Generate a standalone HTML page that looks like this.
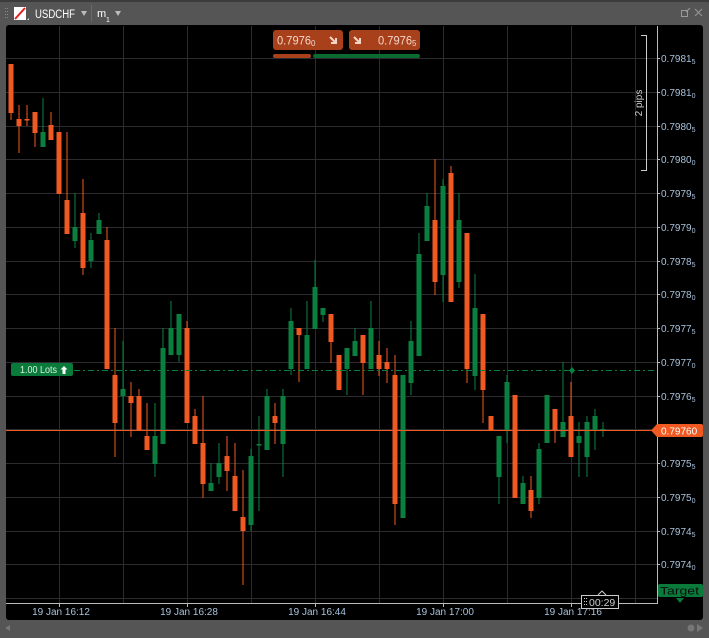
<!DOCTYPE html>
<html><head><meta charset="utf-8"><style>
html,body{margin:0;padding:0;background:#3a3a3a;}
body{width:709px;height:638px;overflow:hidden;position:relative;font-family:"Liberation Sans",sans-serif;}
.frame{position:absolute;left:0;top:0;width:709px;height:638px;background:#555;border-radius:4px 4px 0 0;}
svg{position:absolute;left:0;top:0;}
</style></head><body>
<div class="frame"></div>
<svg width="709" height="638" viewBox="0 0 709 638" font-family="Liberation Sans, sans-serif">
<!-- header -->
<rect x="0" y="0" width="709" height="2" fill="#3c3c3c"/>
<g fill="#888"><rect x="5" y="8" width="1" height="1"/><rect x="7" y="8" width="1" height="1"/><rect x="5" y="11" width="1" height="1"/><rect x="7" y="11" width="1" height="1"/><rect x="5" y="14" width="1" height="1"/><rect x="7" y="14" width="1" height="1"/><rect x="5" y="17" width="1" height="1"/><rect x="7" y="17" width="1" height="1"/></g>
<rect x="14" y="7" width="12" height="13" fill="#fff"/>
<line x1="15" y1="19" x2="25" y2="8" stroke="#e02020" stroke-width="2"/>
<path d="M27 20 L29 20 L29 18 Z" fill="#ddd"/>
<text x="35" y="18" font-size="11.5" fill="#fff" textLength="40" lengthAdjust="spacingAndGlyphs">USDCHF</text>
<path d="M81 11 L87 11 L84 16 Z" fill="#bbb"/>
<rect x="91" y="5" width="1" height="17" fill="#6a6a6a"/>
<text x="97" y="17" font-size="11" fill="#fff">m</text>
<text x="106" y="22" font-size="7" fill="#fff">1</text>
<path d="M115 11 L121 11 L118 16 Z" fill="#bbb"/>
<g stroke="#999" fill="none" stroke-width="1"><rect x="681.5" y="10.5" width="6" height="6"/><path d="M686 12 L690 8"/><path d="M695 9 L702 16 M702 9 L695 16"/></g>
<!-- chart bg -->
<rect x="6" y="25" width="697" height="595" rx="3" fill="#000"/>
<!-- grid -->
<g stroke="#2c2c30" stroke-width="1">
<line x1="6" x2="657" y1="58.5" y2="58.5"/><line x1="6" x2="657" y1="92.5" y2="92.5"/><line x1="6" x2="657" y1="126.5" y2="126.5"/><line x1="6" x2="657" y1="159.5" y2="159.5"/><line x1="6" x2="657" y1="193.5" y2="193.5"/><line x1="6" x2="657" y1="227.5" y2="227.5"/><line x1="6" x2="657" y1="261.5" y2="261.5"/><line x1="6" x2="657" y1="294.5" y2="294.5"/><line x1="6" x2="657" y1="328.5" y2="328.5"/><line x1="6" x2="657" y1="362.5" y2="362.5"/><line x1="6" x2="657" y1="396.5" y2="396.5"/><line x1="6" x2="657" y1="429.5" y2="429.5"/><line x1="6" x2="657" y1="463.5" y2="463.5"/><line x1="6" x2="657" y1="497.5" y2="497.5"/><line x1="6" x2="657" y1="531.5" y2="531.5"/><line x1="6" x2="657" y1="564.5" y2="564.5"/><line x1="6" x2="657" y1="598.5" y2="598.5"/>
<line y1="26" y2="603" x1="59.5" x2="59.5"/><line y1="26" y2="603" x1="123.5" x2="123.5"/><line y1="26" y2="603" x1="187.5" x2="187.5"/><line y1="26" y2="603" x1="251.5" x2="251.5"/><line y1="26" y2="603" x1="315.5" x2="315.5"/><line y1="26" y2="603" x1="379.5" x2="379.5"/><line y1="26" y2="603" x1="443.5" x2="443.5"/><line y1="26" y2="603" x1="507.5" x2="507.5"/><line y1="26" y2="603" x1="571.5" x2="571.5"/><line y1="26" y2="603" x1="635.5" x2="635.5"/>
</g>
<!-- axes -->
<line x1="657.5" y1="26" x2="657.5" y2="603" stroke="#bbb"/>
<line x1="6" y1="603.5" x2="658" y2="603.5" stroke="#bbb"/>
<g fill="#bbb"><rect x="59" y="603" width="1" height="4"/><rect x="187" y="603" width="1" height="4"/><rect x="315" y="603" width="1" height="4"/><rect x="443" y="603" width="1" height="4"/><rect x="571" y="603" width="1" height="4"/></g>
<g font-size="10" fill="#a9c2dc" text-anchor="middle">
<text x="61" y="615">19 Jan 16:12</text><text x="189" y="615">19 Jan 16:28</text><text x="317" y="615">19 Jan 16:44</text><text x="445" y="615">19 Jan 17:00</text><text x="573" y="615">19 Jan 17:16</text>
</g>
<!-- price labels -->
<g font-size="10" fill="#a9c2dc">
<g fill="#bbb"><rect x="657" y="58" width="3" height="1"/><rect x="657" y="92" width="3" height="1"/><rect x="657" y="126" width="3" height="1"/><rect x="657" y="159" width="3" height="1"/><rect x="657" y="193" width="3" height="1"/><rect x="657" y="227" width="3" height="1"/><rect x="657" y="261" width="3" height="1"/><rect x="657" y="294" width="3" height="1"/><rect x="657" y="328" width="3" height="1"/><rect x="657" y="362" width="3" height="1"/><rect x="657" y="396" width="3" height="1"/><rect x="657" y="463" width="3" height="1"/><rect x="657" y="497" width="3" height="1"/><rect x="657" y="531" width="3" height="1"/><rect x="657" y="564" width="3" height="1"/></g>
<text x="661" y="62">0.7981<tspan font-size="7" dy="2">5</tspan></text>
<text x="661" y="96">0.7981<tspan font-size="7" dy="2">0</tspan></text>
<text x="661" y="130">0.7980<tspan font-size="7" dy="2">5</tspan></text>
<text x="661" y="163">0.7980<tspan font-size="7" dy="2">0</tspan></text>
<text x="661" y="197">0.7979<tspan font-size="7" dy="2">5</tspan></text>
<text x="661" y="231">0.7979<tspan font-size="7" dy="2">0</tspan></text>
<text x="661" y="265">0.7978<tspan font-size="7" dy="2">5</tspan></text>
<text x="661" y="298">0.7978<tspan font-size="7" dy="2">0</tspan></text>
<text x="661" y="332">0.7977<tspan font-size="7" dy="2">5</tspan></text>
<text x="661" y="366">0.7977<tspan font-size="7" dy="2">0</tspan></text>
<text x="661" y="400">0.7976<tspan font-size="7" dy="2">5</tspan></text>
<text x="661" y="467">0.7975<tspan font-size="7" dy="2">5</tspan></text>
<text x="661" y="501">0.7975<tspan font-size="7" dy="2">0</tspan></text>
<text x="661" y="535">0.7974<tspan font-size="7" dy="2">5</tspan></text>
<text x="661" y="568">0.7974<tspan font-size="7" dy="2">0</tspan></text>
</g>
<!-- pips bracket -->
<path d="M641 35.5 H646.5 V170.5 H641" stroke="#ccc" fill="none"/>
<text transform="translate(642,103) rotate(-90)" font-size="10" fill="#ccc" text-anchor="middle">2 pips</text>
<!-- candles -->
<g id="c">
<g fill="#f05a22">
<rect x="10.5" y="64" width="1" height="56"/><rect x="8.5" y="64" width="5" height="49"/>
<rect x="18.5" y="105" width="1" height="48"/><rect x="16.5" y="119" width="5" height="7"/>
<rect x="26.5" y="105" width="1" height="21"/><rect x="24.5" y="119" width="5" height="1.5"/>
<rect x="34.5" y="112" width="1" height="35"/><rect x="32.5" y="112" width="5" height="21"/>
<rect x="50.5" y="112" width="1" height="28"/><rect x="48.5" y="125" width="5" height="15"/>
<rect x="56.5" y="132" width="5" height="62"/>
<rect x="66.5" y="132" width="1" height="102"/><rect x="64.5" y="200" width="5" height="34"/>
<rect x="82.5" y="179" width="1" height="96"/><rect x="80.5" y="213" width="5" height="55"/>
<rect x="106.5" y="227" width="1" height="142"/><rect x="104.5" y="240" width="5" height="129"/>
<rect x="114.5" y="328" width="1" height="129"/><rect x="112.5" y="375" width="5" height="48"/>
<rect x="130.5" y="382" width="1" height="55"/><rect x="128.5" y="396" width="5" height="7"/>
<rect x="138.5" y="389" width="1" height="41"/><rect x="136.5" y="396" width="5" height="34"/>
<rect x="146.5" y="403" width="1" height="47"/><rect x="144.5" y="436" width="5" height="14"/>
<rect x="186.5" y="321" width="1" height="102"/><rect x="184.5" y="328" width="5" height="95"/>
<rect x="194.5" y="409" width="1" height="35"/><rect x="192.5" y="416" width="5" height="28"/>
<rect x="202.5" y="396" width="1" height="102"/><rect x="200.5" y="443" width="5" height="41"/>
<rect x="226.5" y="436" width="1" height="55"/><rect x="224.5" y="456" width="5" height="15"/>
<rect x="234.5" y="443" width="1" height="68"/><rect x="232.5" y="476" width="5" height="35"/>
<rect x="242.5" y="470" width="1" height="115"/><rect x="240.5" y="517" width="5" height="14"/>
<rect x="274.5" y="403" width="1" height="41"/><rect x="272.5" y="416" width="5" height="7"/>
<rect x="298.5" y="328" width="1" height="54"/><rect x="296.5" y="328" width="5" height="7"/>
<rect x="330.5" y="314" width="1" height="49"/><rect x="328.5" y="314" width="5" height="28"/>
<rect x="336.5" y="355" width="5" height="35"/>
<rect x="362.5" y="335" width="1" height="60"/><rect x="360.5" y="335" width="5" height="28"/>
<rect x="378.5" y="341" width="1" height="35"/><rect x="376.5" y="355" width="5" height="14"/>
<rect x="386.5" y="348" width="1" height="35"/><rect x="384.5" y="362" width="5" height="7"/>
<rect x="394.5" y="355" width="1" height="170"/><rect x="392.5" y="375" width="5" height="129"/>
<rect x="434.5" y="159" width="1" height="136"/><rect x="432.5" y="220" width="5" height="62"/>
<rect x="450.5" y="166" width="1" height="136"/><rect x="448.5" y="173" width="5" height="129"/>
<rect x="466.5" y="233" width="1" height="150"/><rect x="464.5" y="233" width="5" height="136"/>
<rect x="482.5" y="314" width="1" height="109"/><rect x="480.5" y="314" width="5" height="76"/>
<rect x="488.5" y="416" width="5" height="14"/>
<rect x="512.5" y="395" width="5" height="103"/>
<rect x="530.5" y="476" width="1" height="42"/><rect x="528.5" y="490" width="5" height="21"/>
<rect x="554.5" y="409" width="1" height="34"/><rect x="552.5" y="409" width="5" height="21"/>
<rect x="570.5" y="382" width="1" height="75"/><rect x="568.5" y="416" width="5" height="41"/>
</g>
<g fill="#0a8040">
<rect x="42.5" y="98" width="1" height="49"/><rect x="40.5" y="132" width="5" height="15"/>
<rect x="74.5" y="193" width="1" height="55"/><rect x="72.5" y="227" width="5" height="14"/>
<rect x="90.5" y="233" width="1" height="35"/><rect x="88.5" y="240" width="5" height="21"/>
<rect x="98.5" y="213" width="1" height="21"/><rect x="96.5" y="220" width="5" height="14"/>
<rect x="122.5" y="341" width="1" height="89"/><rect x="120.5" y="389" width="5" height="7"/>
<rect x="154.5" y="403" width="1" height="74"/><rect x="152.5" y="436" width="5" height="28"/>
<rect x="162.5" y="328" width="1" height="116"/><rect x="160.5" y="348" width="5" height="96"/>
<rect x="170.5" y="301" width="1" height="54"/><rect x="168.5" y="328" width="5" height="27"/>
<rect x="178.5" y="314" width="1" height="48"/><rect x="176.5" y="314" width="5" height="41"/>
<rect x="210.5" y="463" width="1" height="28"/><rect x="208.5" y="483" width="5" height="8"/>
<rect x="218.5" y="443" width="1" height="41"/><rect x="216.5" y="463" width="5" height="14"/>
<rect x="250.5" y="449" width="1" height="82"/><rect x="248.5" y="456" width="5" height="69"/>
<rect x="258.5" y="416" width="1" height="95"/><rect x="256.5" y="444" width="5" height="1.5"/>
<rect x="266.5" y="389" width="1" height="61"/><rect x="264.5" y="396" width="5" height="54"/>
<rect x="282.5" y="389" width="1" height="88"/><rect x="280.5" y="396" width="5" height="48"/>
<rect x="290.5" y="308" width="1" height="67"/><rect x="288.5" y="321" width="5" height="48"/>
<rect x="306.5" y="301" width="1" height="68"/><rect x="304.5" y="335" width="5" height="34"/>
<rect x="314.5" y="260" width="1" height="69"/><rect x="312.5" y="287" width="5" height="42"/>
<rect x="322.5" y="308" width="1" height="14"/><rect x="320.5" y="308" width="5" height="7"/>
<rect x="346.5" y="348" width="1" height="47"/><rect x="344.5" y="348" width="5" height="21"/>
<rect x="354.5" y="328" width="1" height="28"/><rect x="352.5" y="341" width="5" height="15"/>
<rect x="370.5" y="301" width="1" height="68"/><rect x="368.5" y="328" width="5" height="41"/>
<rect x="400.5" y="375" width="5" height="143"/>
<rect x="410.5" y="321" width="1" height="74"/><rect x="408.5" y="341" width="5" height="42"/>
<rect x="418.5" y="233" width="1" height="123"/><rect x="416.5" y="254" width="5" height="102"/>
<rect x="426.5" y="193" width="1" height="48"/><rect x="424.5" y="206" width="5" height="35"/>
<rect x="442.5" y="179" width="1" height="123"/><rect x="440.5" y="186" width="5" height="89"/>
<rect x="458.5" y="193" width="1" height="95"/><rect x="456.5" y="220" width="5" height="62"/>
<rect x="474.5" y="274" width="1" height="116"/><rect x="472.5" y="308" width="5" height="68"/>
<rect x="498.5" y="436" width="1" height="68"/><rect x="496.5" y="436" width="5" height="41"/>
<rect x="506.5" y="375" width="1" height="68"/><rect x="504.5" y="382" width="5" height="48"/>
<rect x="522.5" y="476" width="1" height="28"/><rect x="520.5" y="483" width="5" height="21"/>
<rect x="538.5" y="443" width="1" height="61"/><rect x="536.5" y="449" width="5" height="49"/>
<rect x="544.5" y="395" width="5" height="48"/>
<rect x="562.5" y="362" width="1" height="75"/><rect x="560.5" y="422" width="5" height="15"/>
<rect x="578.5" y="422" width="1" height="55"/><rect x="576.5" y="436" width="5" height="7"/>
<rect x="586.5" y="416" width="1" height="61"/><rect x="584.5" y="422" width="5" height="35"/>
<rect x="594.5" y="409" width="1" height="41"/><rect x="592.5" y="416" width="5" height="14"/>
<rect x="602.5" y="422" width="1" height="15"/><rect x="600.5" y="429" width="5" height="1.5"/>
</g>
</g>
<!-- lots line -->
<line x1="74" y1="370.5" x2="657" y2="370.5" stroke="#0a8040" stroke-dasharray="6,3,2,3"/>
<path d="M572 367 L575 370.5 L572 374 L569 370.5 Z" fill="#0a8040"/>
<rect x="11" y="363" width="62" height="13" rx="2" fill="#0a7a3a"/>
<text x="20" y="373" font-size="10" fill="#d8f0e0" textLength="37" lengthAdjust="spacingAndGlyphs">1.00 Lots</text>
<path d="M64 366 L67.5 369.5 H65.5 V374 H62.5 V369.5 H60.5 Z" fill="#fff"/>
<!-- price line -->
<line x1="6" y1="430.5" x2="652" y2="430.5" stroke="#f05a22"/>
<path d="M651 430.5 L657 424 H701 Q703 424 703 426 V435 Q703 437 701 437 H657 Z" fill="#f05a22"/>
<text x="661" y="434.5" font-size="10" fill="#fff">0.79760</text>
<!-- buy/sell -->
<rect x="273" y="30" width="70" height="20" rx="3" fill="#a9401c"/>
<text x="277" y="44.5" font-size="12" fill="#f3d6c8" textLength="34" lengthAdjust="spacingAndGlyphs">0.7976</text>
<text x="311" y="46" font-size="8" fill="#f3d6c8">0</text>
<path d="M330 37 L336 43 M331 43 H336 V38" stroke="#f3d6c8" stroke-width="2" fill="none"/>
<rect x="349" y="30" width="71" height="20" rx="3" fill="#a9401c"/>
<path d="M354 37 L360 43 M355 43 H360 V38" stroke="#f3d6c8" stroke-width="2" fill="none"/>
<text x="378" y="44.5" font-size="12" fill="#f3d6c8" textLength="34" lengthAdjust="spacingAndGlyphs">0.7976</text>
<text x="412" y="46" font-size="8" fill="#f3d6c8">5</text>
<rect x="273" y="54" width="38" height="4" rx="2" fill="#a9401c"/>
<rect x="313" y="54" width="107" height="4" rx="2" fill="#0a6a32"/>
<!-- target -->
<rect x="658" y="584" width="45" height="13" rx="2" fill="#0a7a3a"/>
<text x="660" y="594.5" font-size="11" fill="#0c0c0c" textLength="39" lengthAdjust="spacingAndGlyphs">Target</text>
<path d="M676 598 H684 L680 603 Z" fill="#0a7a3a"/>
<!-- timer -->
<path d="M598 595 L602 591 L606 595" stroke="#ccc" fill="#000"/>
<rect x="581.5" y="595.5" width="37" height="13" fill="#000" stroke="#ccc"/>
<g fill="#ccc"><rect x="584" y="598" width="1" height="1"/><rect x="586" y="598" width="1" height="1"/><rect x="584" y="601" width="1" height="1"/><rect x="586" y="601" width="1" height="1"/><rect x="584" y="604" width="1" height="1"/><rect x="586" y="604" width="1" height="1"/></g>
<text x="589" y="606" font-size="10.5" fill="#ccc">00:29</text>
<!-- bottom bar -->
<path d="M10 625 L5 628 L10 631 Z" fill="#777"/>
<circle cx="691" cy="628" r="3.5" fill="#777"/>
<path d="M697 624 L703 628 L697 632 Z" fill="#777"/>
</svg>
</body></html>
